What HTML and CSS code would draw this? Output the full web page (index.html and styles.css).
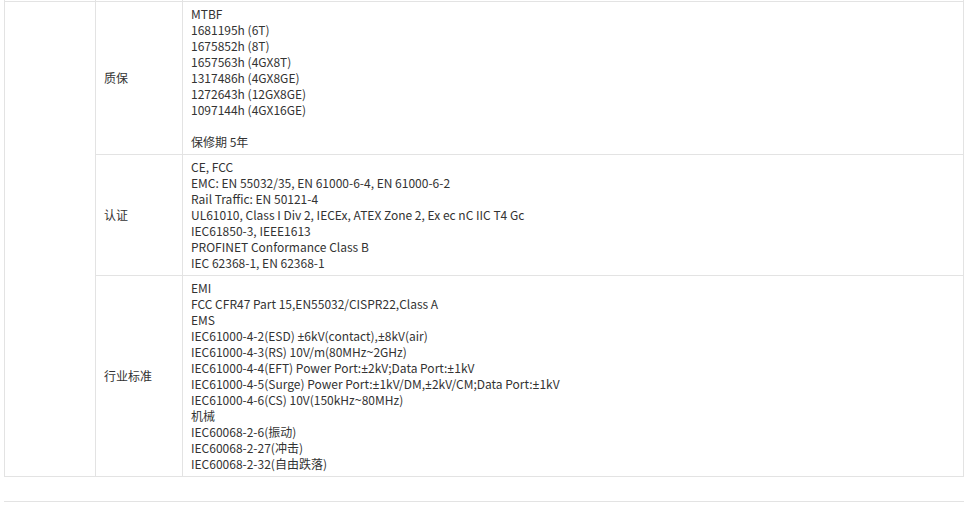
FILE: index.html
```html
<!DOCTYPE html>
<html lang="zh-CN">
<head>
    <meta charset="UTF-8">
    <title>产品规格</title>
    <link rel="stylesheet" href="styles.css">
</head>
<body>
<table class="spec">
    <colgroup>
        <col class="col-blank">
        <col class="col-label">
        <col>
    </colgroup>
    <tr class="cut">
        <td></td>
        <td></td>
        <td></td>
    </tr>
    <tr>
        <td rowspan="3"></td>
        <td>质保</td>
        <td>
            MTBF<br>
            1681195h (6T)<br>
            1675852h (8T)<br>
            1657563h (4GX8T)<br>
            1317486h (4GX8GE)<br>
            1272643h (12GX8GE)<br>
            1097144h (4GX16GE)<br>
            <br>
            保修期 5年
        </td>
    </tr>
    <tr>
        <td>认证</td>
        <td>
            CE, FCC<br>
            EMC: EN 55032/35, EN 61000-6-4, EN 61000-6-2<br>
            Rail Traffic: EN 50121-4<br>
            UL61010, Class I Div 2, IECEx, ATEX Zone 2, Ex ec nC IIC T4 Gc<br>
            IEC61850-3, IEEE1613<br>
            PROFINET Conformance Class B<br>
            IEC 62368-1, EN 62368-1
        </td>
    </tr>
    <tr>
        <td>行业标准</td>
        <td>
            EMI<br>
            FCC CFR47 Part 15,EN55032/CISPR22,Class A<br>
            EMS<br>
            IEC61000-4-2(ESD) <span class="sym">±</span>6kV(contact),<span class="sym">±</span>8kV(air)<br>
            IEC61000-4-3(RS) 10V/m(80MHz<span class="sym">~</span>2GHz)<br>
            IEC61000-4-4(EFT) Power Port:<span class="sym">±</span>2kV;Data Port:<span class="sym">±</span>1kV<br>
            IEC61000-4-5(Surge) Power Port:<span class="sym">±</span>1kV/DM,<span class="sym">±</span>2kV/CM;Data Port:<span class="sym">±</span>1kV<br>
            IEC61000-4-6(CS) 10V(150kHz<span class="sym">~</span>80MHz)<br>
            机械<br>
            IEC60068-2-6(振动)<br>
            IEC60068-2-27(冲击)<br>
            IEC60068-2-32(自由跌落)
        </td>
    </tr>
</table>
<div class="divider"></div>
</body>
</html>
```

FILE: styles.css
```css
body {
    margin: 0;
    padding: 0 5px 0 4px;
    background: white;
    color: #333;
    font-family: "Noto Sans CJK SC", "Noto Sans", sans-serif;
    font-size: 12px;
    line-height: 16px;
}
.spec {
    width: 960px;
    border-collapse: collapse;
    table-layout: fixed;
}
.col-blank {
    width: 91px;
}
.col-label {
    width: 87px;
}
.spec td {
    border: 1px solid #e3e3e3;
    padding: 4px 8px;
    vertical-align: middle;
}
.spec .cut td {
    border-top: none;
    padding: 0;
    height: 1px;
}
.sym {
    font-family: "Noto Sans", sans-serif;
    line-height: 1;
}
.divider {
    margin-top: 24px;
    width: 960px;
    border-top: 1px solid #e3e3e3;
}
```
